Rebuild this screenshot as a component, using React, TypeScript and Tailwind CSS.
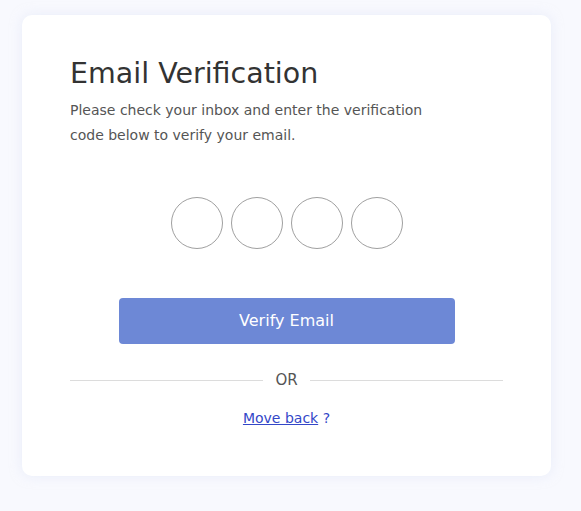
export default function App() {
  return (
    <div className="min-h-[511px] w-[581px] bg-[#f8f9fe] pt-[15px] pl-[22px]" style={{ fontFamily: '"DejaVu Sans", sans-serif' }}>
      <div className="w-[529px] h-[461px] bg-white rounded-[10px] shadow-[0_0_12px_rgba(220,225,245,0.5)] px-12 pt-[41px]">
        <h1 className="text-[28.5px] leading-[36px] text-[#333333] font-normal">Email Verification</h1>
        <p className="mt-[6px] max-w-[390px] text-[14px] leading-[25px] text-[#555555]">
          Please check your inbox and enter the verification code below to verify your email.
        </p>
        <div className="mt-[49px] flex justify-center gap-2">
          {[0, 1, 2, 3].map((i) => (
            <input key={i} maxLength={1} className="w-[52px] h-[52px] rounded-full border border-[#a0a0a0] text-center outline-none" />
          ))}
        </div>
        <div className="mt-[49px] flex justify-center">
          <button className="w-[336px] h-[46px] rounded-[4px] bg-[#6d88d6] text-white text-[16px]">Verify Email</button>
        </div>
        <div className="mt-[25px] flex items-center gap-3 text-[15px] text-[#555555]">
          <div className="flex-1 h-px bg-[#dcdcdc]" />
          <span>OR</span>
          <div className="flex-1 h-px bg-[#dcdcdc]" />
        </div>
        <div className="mt-[16px] text-center text-[14px]">
          <a href="#" className="underline text-[#3347c8]">Move back</a>
          <span className="text-[#3347c8]"> ?</span>
        </div>
      </div>
    </div>
  );
}
